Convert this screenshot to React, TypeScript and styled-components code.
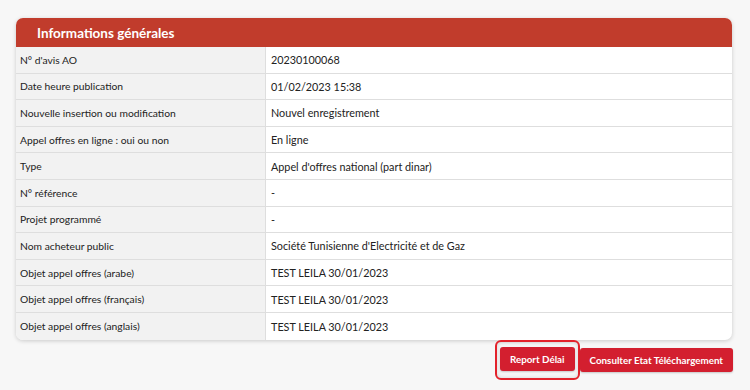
import React from "react";
import styled, {createGlobalStyle} from "styled-components";

const GlobalStyle = createGlobalStyle`
  html, body {
    margin: 0;
    padding: 0;
    background: #f7f7f7;
  }
  body {
    font-family: Lato, "Open Sans", sans-serif;
    color: #222;
  }
`;

const rows: [string, string][] = [
    ["N° d'avis AO", "20230100068"],
    ["Date heure publication", "01/02/2023 15:38"],
    ["Nouvelle insertion ou modification", "Nouvel enregistrement"],
    ["Appel offres en ligne : oui ou non", "En ligne"],
    ["Type", "Appel d'offres national (part dinar)"],
    ["N° référence", "-"],
    ["Projet programmé", "-"],
    ["Nom acheteur public", "Société Tunisienne d'Electricité et de Gaz"],
    ["Objet appel offres (arabe)", "TEST LEILA 30/01/2023"],
    ["Objet appel offres (français)", "TEST LEILA 30/01/2023"],
    ["Objet appel offres (anglais)", "TEST LEILA 30/01/2023"],
];

export default function App() {
    return (
        <>
            <GlobalStyle/>
            <Page>
                <Card>
                    <Header>Informations générales</Header>
                    <Table>
                        {rows.map(([label, value], index) => (
                            <Row key={index} $last={index === rows.length - 1}>
                                <Label>{label}</Label>
                                <Value>{value}</Value>
                            </Row>
                        ))}
                    </Table>
                </Card>
                <Actions>
                    <FocusRing>
                        <Button>Report Délai</Button>
                    </FocusRing>
                    <Button>Consulter Etat Téléchargement</Button>
                </Actions>
            </Page>
        </>
    );
}

const Page = styled.div`
  width: 750px;
  height: 390px;
  box-sizing: border-box;
  padding: 18px 18px 0 16px;
  display: flex;
  flex-direction: column;
`;

const Card = styled.div`
  width: 716px;
  background: #fff;
  border-radius: 7px;
  box-shadow: 0 1px 4px rgba(0, 0, 0, 0.18);
  overflow: hidden;
`;

const Header = styled.div`
  height: 29px;
  background: #c13c2c;
  color: #fff;
  font-weight: 700;
  font-size: 13.5px;
  padding-left: 21px;
  display: flex;
  align-items: center;
`;

const Table = styled.div`
  display: flex;
  flex-direction: column;
`;

const Row = styled.div<{ $last: boolean }>`
  display: grid;
  grid-template-columns: 250px 1fr;
  height: 26.6px;
  box-sizing: border-box;
  border-bottom: ${p => (p.$last ? "none" : "1px solid #dedede")};
`;

const Label = styled.div`
  background: #f2f2f2;
  border-right: 1px solid #dedede;
  padding-left: 4px;
  display: flex;
  align-items: center;
  font-size: 10.3px;
  color: #222;
`;

const Value = styled.div`
  padding-left: 5px;
  display: flex;
  align-items: center;
  font-size: 10.8px;
  color: #222;
`;

const Actions = styled.div`
  display: flex;
  justify-content: flex-end;
  align-items: center;
  width: 717px;
`;

const FocusRing = styled.div`
  padding: 5px 3px 7px 3px;
  border: 2px solid #e3222b;
  border-radius: 6px;
  box-shadow: inset 0 0 4px rgba(0, 0, 0, 0.15);
  display: flex;
`;

const Button = styled.button`
  height: 24px;
  padding: 0 10px;
  background: #d31f2f;
  color: #fff;
  border: none;
  border-radius: 3px;
  font-family: Lato, sans-serif;
  font-weight: 700;
  font-size: 9.8px;
  box-shadow: 0 1px 2px rgba(0, 0, 0, 0.2);
  cursor: pointer;
`;
